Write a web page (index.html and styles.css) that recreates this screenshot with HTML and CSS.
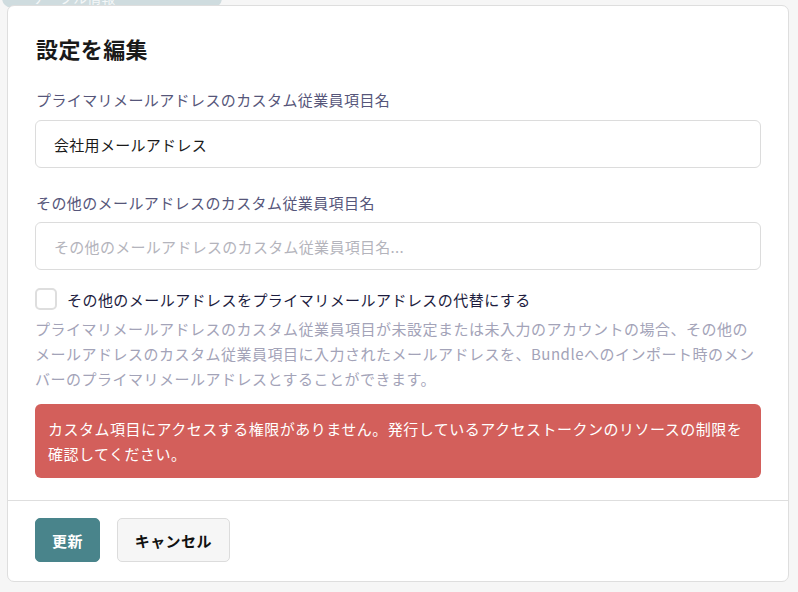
FILE: index.html
```html
<!DOCTYPE html>
<html lang="ja">
<head>
    <meta charset="UTF-8">
    <meta name="viewport" content="width=device-width, initial-scale=1.0">
    <title>設定を編集</title>
    <link rel="stylesheet" href="styles.css">
</head>
<body>
    <!-- 背景のページ（モーダルの後ろ） -->
    <div class="bg-tab">ケーブル情報</div>

    <div class="modal">
        <div class="modal-body">
            <h1>設定を編集</h1>

            <label class="field-label" for="primaryName">プライマリメールアドレスのカスタム従業員項目名</label>
            <input type="text" id="primaryName" class="text-input" value="会社用メールアドレス">

            <label class="field-label second" for="otherName">その他のメールアドレスのカスタム従業員項目名</label>
            <input type="text" id="otherName" class="text-input" placeholder="その他のメールアドレスのカスタム従業員項目名...">

            <label class="check-row">
                <input type="checkbox" class="check">
                <span class="check-box"></span>
                <span>その他のメールアドレスをプライマリメールアドレスの代替にする</span>
            </label>
            <p class="help">プライマリメールアドレスのカスタム従業員項目が未設定または未入力のアカウントの場合、その他のメールアドレスのカスタム従業員項目に入力されたメールアドレスを、Bundleへのインポート時のメンバーのプライマリメールアドレスとすることができます。</p>

            <div class="error">カスタム項目にアクセスする権限がありません。発行しているアクセストークンのリソースの制限を確認してください。</div>
        </div>

        <div class="modal-footer">
            <button type="button" class="btn btn-primary">更新</button>
            <button type="button" class="btn btn-default">キャンセル</button>
        </div>
    </div>
</body>
</html>
```

FILE: styles.css
```css
body {
    font-family: "Noto Sans CJK JP", "Noto Sans", sans-serif;
    margin: 0;
    padding: 5px 0 0 7px;
    background-color: #f6f6f6;
    color: #1a1a1a;
    height: 592px;
    box-sizing: border-box;
    position: relative;
    overflow: hidden;
}
.bg-tab {
    position: absolute;
    left: 2px;
    top: -14px;
    width: 220px;
    height: 22px;
    border-radius: 10px;
    background-color: #cfdcdf;
    color: #f4f7f8;
    font-size: 14px;
    line-height: 22px;
    padding-left: 30px;
    box-sizing: border-box;
}
.modal {
    position: relative;
    width: 782px;
    background-color: white;
    border: 1px solid #dedede;
    border-radius: 7px;
    box-sizing: border-box;
}
.modal-body {
    padding: 27px 27px 22px 27px;
}
h1 {
    font-size: 22px;
    font-weight: bold;
    line-height: 30px;
    margin: 0 0 26px 1px;
    letter-spacing: 0.4px;
}
.field-label {
    display: block;
    font-size: 15px;
    line-height: 22px;
    color: #56567a;
    letter-spacing: 0.4px;
    margin: 0 0 9px 1px;
}
.field-label.second {
    margin-top: 24px;
    margin-bottom: 8px;
}
.text-input {
    display: block;
    width: 100%;
    height: 48px;
    box-sizing: border-box;
    border: 1px solid #dcdcdc;
    border-radius: 6px;
    padding: 0 18px;
    font-family: inherit;
    font-size: 15px;
    letter-spacing: 0.3px;
    color: #1a1a1a;
}
.text-input::placeholder {
    color: #b4b4bc;
}
.check-row {
    display: flex;
    align-items: center;
    margin-top: 18px;
    height: 22px;
    font-size: 15px;
    letter-spacing: 0.45px;
    color: #1c1c3e;
}
.check {
    display: none;
}
.check-box {
    width: 22px;
    height: 22px;
    box-sizing: border-box;
    border: 2px solid #dedede;
    border-radius: 5px;
    margin-right: 10px;
}
.help {
    margin: 6px 0 0 0;
    font-size: 15px;
    line-height: 25px;
    letter-spacing: 0.5px;
    color: #a3a3b8;
}
.error {
    margin-top: 13px;
    background-color: #d35f5b;
    color: white;
    border-radius: 6px;
    padding: 12px 13px 12px 13px;
    font-size: 15px;
    line-height: 25px;
    letter-spacing: 0.5px;
}
.modal-footer {
    border-top: 1px solid #dedede;
    padding: 17px 27px 19px 27px;
    display: flex;
    gap: 17px;
}
.btn {
    height: 44px;
    padding: 0 16px;
    font-family: inherit;
    font-size: 15px;
    font-weight: bold;
    letter-spacing: 0.4px;
    border-radius: 5px;
    cursor: pointer;
}
.btn-primary {
    background-color: #49848b;
    color: white;
    border: 1px solid #49848b;
}
.btn-default {
    padding: 0 17px;
    background-color: #f6f6f6;
    color: #111;
    border: 1px solid #dcdcdc;
}
```
